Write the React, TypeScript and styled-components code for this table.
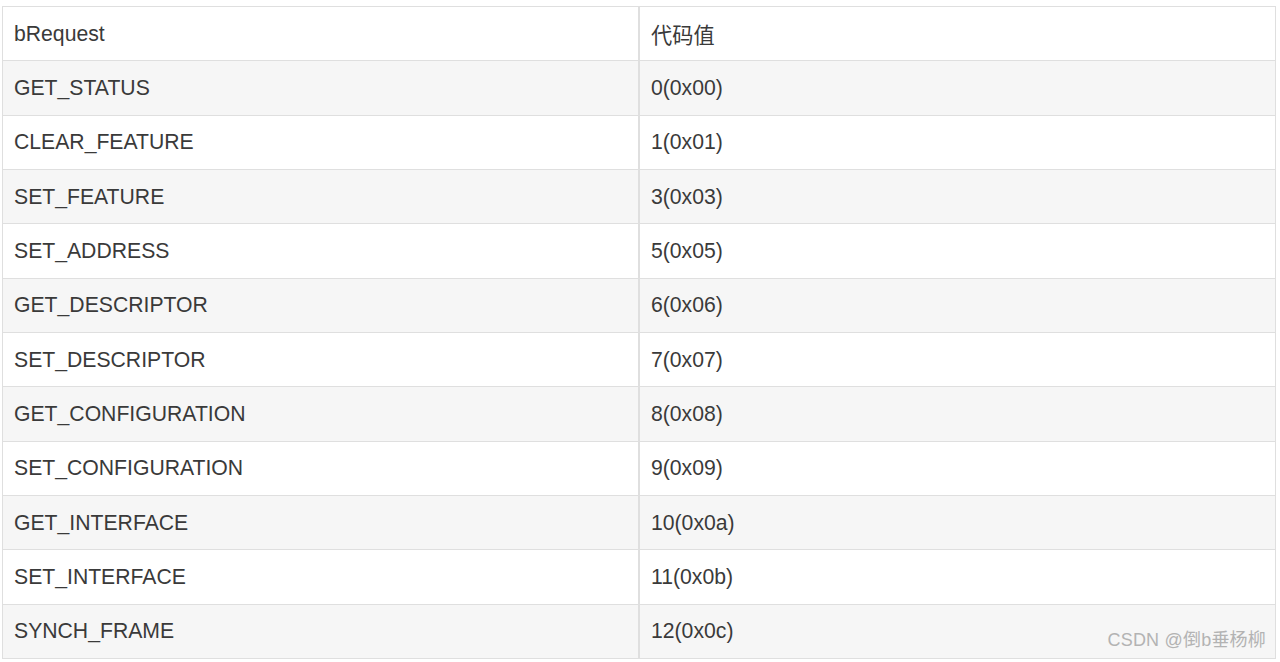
import React from "react";
import styled, { createGlobalStyle } from "styled-components";

const GlobalStyle = createGlobalStyle`
  html, body {
    margin: 0;
    padding: 0;
    background: #ffffff;
  }
`;

// 페이지 래퍼
const Page = styled.div`
  position: relative;
  padding: 6px 4px 0 2px;
  font-family: "Liberation Sans", Arial, "Noto Sans CJK SC", sans-serif;
`;

const Table = styled.table`
  width: 100%;
  border-collapse: collapse;
  table-layout: fixed;
  color: #3a3a3a;
  font-size: 21.2px;
`;

const Row = styled.tr<{ $shaded: boolean }>`
  height: 54.33px;
  background: ${(p) => (p.$shaded ? "#f6f6f6" : "#ffffff")};
`;

const Cell = styled.td`
  border: 1px solid #dfdfdf;
  padding: 0 10px 0 11px;
  vertical-align: middle;
  white-space: nowrap;

  &:first-child {
    border-right: 2px solid #dfdfdf;
  }
`;

const Watermark = styled.div`
  position: absolute;
  right: 14px;
  bottom: 8px;
  font-size: 18px;
  color: #b3b3b3;
  letter-spacing: 0.2px;
  font-family: "Liberation Sans", Arial, "Noto Sans CJK SC", sans-serif;
`;

const rows: [string, string][] = [
  ["bRequest", "代码值"],
  ["GET_STATUS", "0(0x00)"],
  ["CLEAR_FEATURE", "1(0x01)"],
  ["SET_FEATURE", "3(0x03)"],
  ["SET_ADDRESS", "5(0x05)"],
  ["GET_DESCRIPTOR", "6(0x06)"],
  ["SET_DESCRIPTOR", "7(0x07)"],
  ["GET_CONFIGURATION", "8(0x08)"],
  ["SET_CONFIGURATION", "9(0x09)"],
  ["GET_INTERFACE", "10(0x0a)"],
  ["SET_INTERFACE", "11(0x0b)"],
  ["SYNCH_FRAME", "12(0x0c)"],
];

export default function App() {
  return (
    <Page>
      <GlobalStyle />
      <Table>
        <tbody>
          {rows.map(([name, code], i) => (
            <Row key={name} $shaded={i % 2 === 1}>
              <Cell>{name}</Cell>
              <Cell>{code}</Cell>
            </Row>
          ))}
        </tbody>
      </Table>
      <Watermark>CSDN @倒b垂杨柳</Watermark>
    </Page>
  );
}
